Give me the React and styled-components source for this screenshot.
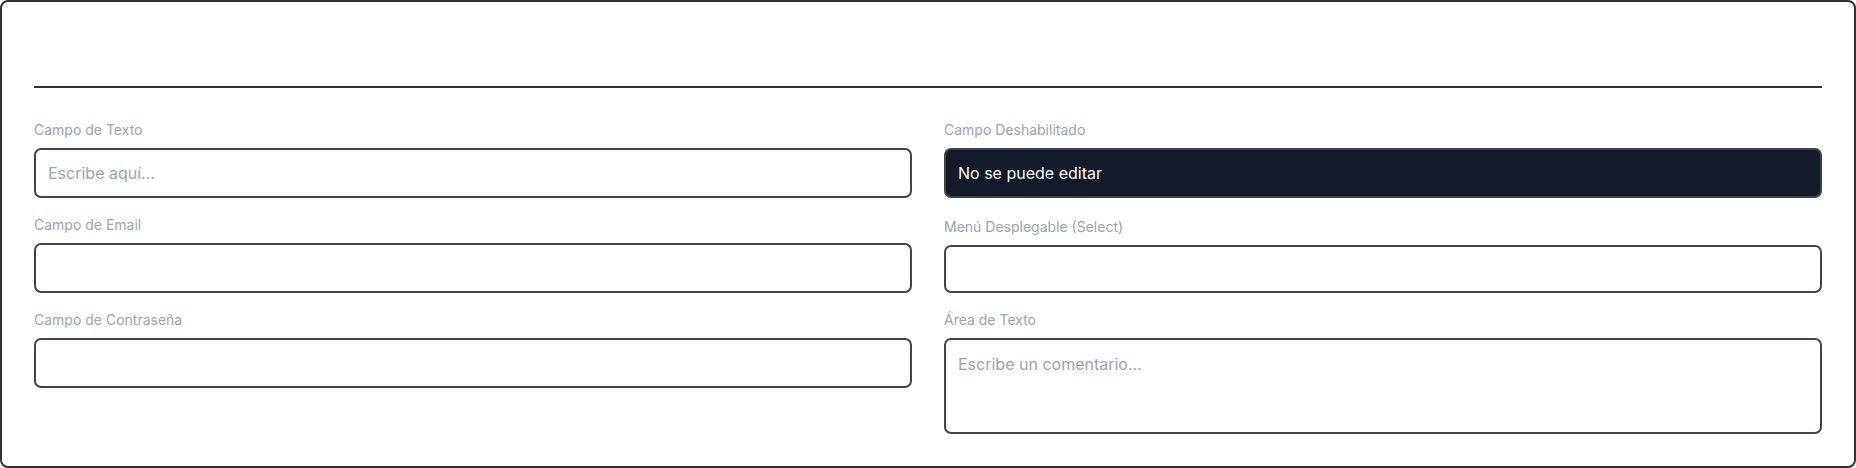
import React from "react";
import styled, { createGlobalStyle } from "styled-components";

const GlobalStyle = createGlobalStyle`
  *, *::before, *::after { box-sizing: border-box; }
  html, body { margin: 0; padding: 0; background: #ffffff; }
  body { font-family: Inter, "Noto Sans", "Liberation Sans", sans-serif; }
`;

const Card = styled.section`
  width: 1856px;
  height: 468px;
  border: 2px solid #333333;
  border-radius: 8px;
  background: #ffffff;
  padding: 32px;
  overflow: hidden;
`;

const Header = styled.div`
  height: 54px;
  border-bottom: 2px solid #333333;
  margin-bottom: 31px;
`;

const Grid = styled.div`
  display: grid;
  grid-template-columns: 1fr 1fr;
  column-gap: 32px;
  row-gap: 16px;
  align-items: start;
`;

const Field = styled.div`
  display: flex;
  flex-direction: column;
  gap: 8px;
  padding-top: ${(p) => p.$shift || 0}px;
`;

const Label = styled.label`
  font-family: Inter, "Noto Sans", sans-serif;
  font-size: 14px;
  line-height: 21px;
  color: #9ca3af;
`;

const controlBase = `
  width: 100%;
  font-family: Inter, "Noto Sans", sans-serif;
  font-size: 16px;
  line-height: 24px;
  border: 2px solid #444444;
  border-radius: 7px;
  padding: 11px 12px;
  outline: none;
  margin: 0;
`;

const Input = styled.input`
  ${controlBase}
  height: 50px;
  background: ${(p) => (p.disabled ? "#131a29" : "#ffffff")};
  color: ${(p) => (p.disabled ? "#f9fafb" : "#111827")};
  opacity: 1;
  -webkit-text-fill-color: ${(p) => (p.disabled ? "#f9fafb" : "#111827")};
  &::placeholder {
    color: #9ca3af;
    -webkit-text-fill-color: #9ca3af;
  }
`;

const Select = styled.select`
  ${controlBase}
  height: 48px;
  background: #ffffff;
  color: #111827;
  appearance: none;
`;

const TextArea = styled.textarea`
  ${controlBase}
  height: 96px;
  padding-top: 12px;
  resize: none;
  background: #ffffff;
  color: #111827;
  display: block;
  &::placeholder {
    color: #9ca3af;
  }
`;

export default function App() {
  return (
    <>
      <GlobalStyle />
      <Card>
        <Header />
        <Grid>
          <Field>
            <Label>Campo de Texto</Label>
            <Input type="text" placeholder="Escribe aquí..." />
          </Field>
          <Field>
            <Label>Campo Deshabilitado</Label>
            <Input type="text" value="No se puede editar" disabled readOnly />
          </Field>
          <Field>
            <Label>Campo de Email</Label>
            <Input type="email" />
          </Field>
          <Field $shift={2}>
            <Label>Menú Desplegable (Select)</Label>
            <Select defaultValue="">
              <option value=""></option>
            </Select>
          </Field>
          <Field>
            <Label>Campo de Contraseña</Label>
            <Input type="password" />
          </Field>
          <Field>
            <Label>Área de Texto</Label>
            <TextArea placeholder="Escribe un comentario..." />
          </Field>
        </Grid>
      </Card>
    </>
  );
}
